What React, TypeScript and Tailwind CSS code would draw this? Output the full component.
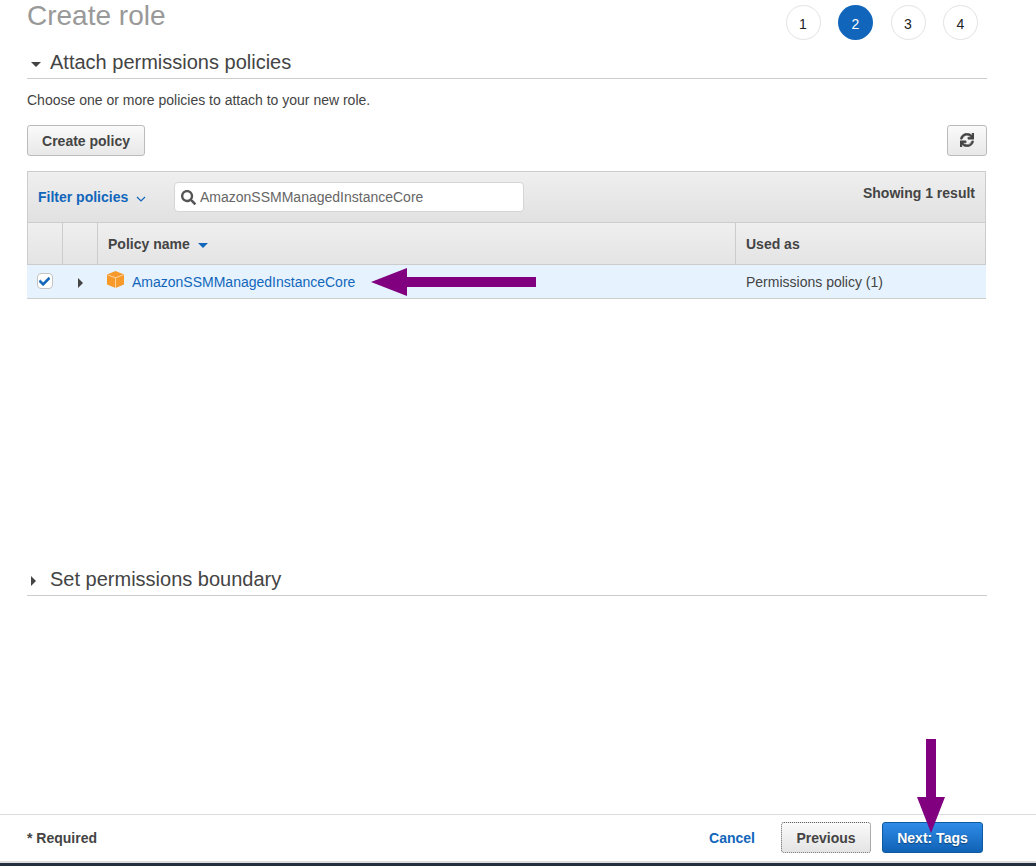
import React from "react";
import { FaSync, FaSearch, FaCheck } from "react-icons/fa";

function Caret({ dir, className }: { dir: "down" | "right"; className: string }) {
  return dir === "down" ? (
    <svg width="10" height="5" viewBox="0 0 10 5" className={className} fill="currentColor"><polygon points="0,0 10,0 5,5" /></svg>
  ) : (
    <svg width="5" height="10" viewBox="0 0 5 10" className={className} fill="currentColor"><polygon points="0,0 5,5 0,10" /></svg>
  );
}

function Step({ n, active }: { n: number; active?: boolean }) {
  return (
    <div className={active
      ? "w-[35px] h-[35px] rounded-full bg-[#1166bb] text-white flex items-center justify-center text-[14px] pt-[4px]"
      : "w-[35px] h-[35px] rounded-full bg-white border border-[#e3e3e3] text-[#222222] flex items-center justify-center text-[14px] pt-[4px]"}>{n}</div>
  );
}

function Heading({ title, open }: { title: string; open: boolean }) {
  return (
    <div className="h-[33px] border-b border-[#cccccc] flex items-center text-[#444444]">
      <span className="w-[23px] flex justify-start pl-[4px] pt-[4px]">
        <Caret dir={open ? "down" : "right"} className="text-[#444444]" />
      </span>
      <h2 className="text-[20px] leading-[24px]">{title}</h2>
    </div>
  );
}

export default function App() {
  return (
    <div className="relative w-[1036px] h-[866px] overflow-hidden bg-white flex flex-col font-['Liberation_Sans',Arial,sans-serif]">
      <main className="flex-1 pl-[27px] pr-[49px]">
        <div className="h-[46px] flex items-start justify-between">
          <h1 className="text-[28px] leading-[32px] text-[#999999]">Create role</h1>
          <div className="flex gap-[17.5px] mt-[5px] mr-[9px]">
            <Step n={1} />
            <Step n={2} active />
            <Step n={3} />
            <Step n={4} />
          </div>
        </div>

        <Heading title="Attach permissions policies" open />

        <p className="mt-[13px] text-[14px] leading-[16px] text-[#444444]">Choose one or more policies to attach to your new role.</p>

        <div className="mt-[17px] flex justify-between">
          <button className="h-[31px] w-[118px] rounded-[3px] border border-[#bbbbbb] bg-linear-to-b from-[#fafafa] to-[#e8e8e8] text-[14px] pt-[2px] font-bold text-[#444444]">Create policy</button>
          <button className="h-[31px] w-[40px] rounded-[3px] border border-[#bbbbbb] bg-linear-to-b from-[#fafafa] to-[#e8e8e8] flex items-center justify-center text-[#444444] pb-[2px]">
            <FaSync size={14} stroke="currentColor" strokeWidth={20} />
          </button>
        </div>

        <div className="mt-[15px] w-[959px] border border-t-[#cccccc] border-x-[#cccccc] border-b-0">
          <div className="h-[51px] flex items-start bg-linear-to-b from-[#efefef] to-[#e1e1e1] border-b border-[#cccccc]">
            <div className="h-[50px] w-[146px] pl-[10px] flex items-center text-[14px] font-bold text-[#1166bb]">
              <span>Filter policies</span>
              <svg width="10" height="6" viewBox="0 0 10 6" className="ml-[8px] mt-[3px]" fill="none" stroke="#1166bb" strokeWidth="1.2"><polyline points="1,1 5,5 9,1" /></svg>
            </div>
            <div className="mt-[10px] w-[350px] h-[30px] bg-white border border-[#d5d5d5] rounded-[4px] flex items-center pl-[6px] text-[14px] text-[#666666]">
              <FaSearch size={15} className="text-[#555555]" />
              <span className="ml-[4px]">AmazonSSMManagedInstanceCore</span>
            </div>
            <div className="flex-1 text-right pr-[10px] pt-[13px] text-[14px] leading-[16px] font-bold text-[#444444]">Showing 1 result</div>
          </div>
          <div className="h-[42px] flex bg-linear-to-b from-[#efefef] to-[#e4e4e4] border-b border-[#cccccc] text-[14px] font-bold text-[#444444]">
            <div className="w-[35px] border-r border-[#cccccc]" />
            <div className="w-[35px] border-r border-[#cccccc]" />
            <div className="w-[638px] border-r border-[#cccccc] pl-[10px] pt-[2px] flex items-center">
              Policy name
              <Caret dir="down" className="ml-[8px] mt-[2px] text-[#1166bb]" />
            </div>
            <div className="flex-1 pl-[10px] pt-[2px] flex items-center">Used as</div>
          </div>
        </div>
        <div className="w-[959px] h-[34px] flex items-center bg-[#e6f3fe] border-b border-[#cccccc] text-[14px]">
          <div className="w-[35px] flex justify-center -mt-[1px]">
            <span className="w-[16px] h-[16px] bg-white border border-[#c4c4c4] rounded-[4px] flex items-center justify-center text-[#1166bb]">
              <FaCheck size={11} stroke="currentColor" strokeWidth={30} />
            </span>
          </div>
          <div className="w-[36px] flex justify-center pt-[3px]">
            <Caret dir="right" className="text-[#444444]" />
          </div>
          <div className="w-[638px] pl-[9px] flex items-center text-[#1166bb]">
            <svg width="17" height="17" viewBox="0 0 17 17" className="-mt-[4px]">
              <polygon points="8.5,0 17,3.5 17,13.5 8.5,17 0,13.5 0,3.5" fill="#f89a2a" />
              <polyline points="0.5,3.8 8.5,6.8 16.5,3.8" fill="none" stroke="#fcd3a0" strokeWidth="1" />
              <line x1="8.5" y1="6.8" x2="8.5" y2="17" stroke="#fcd3a0" strokeWidth="1" />
            </svg>
            <span className="ml-[8px] pt-[2px]">AmazonSSMManagedInstanceCore</span>
          </div>
          <div className="flex-1 pl-[10px] pt-[2px] text-[#444444]">Permissions policy (1)</div>
        </div>

        <div className="mt-[264px]">
          <Heading title="Set permissions boundary" open={false} />
        </div>
      </main>

      <footer className="h-[47px] border-t border-[#dddddd] flex items-center pl-[27px] pr-[53px] text-[14px] font-bold">
        <span className="text-[#444444]">* Required</span>
        <span className="ml-auto text-[#1166bb]">Cancel</span>
        <button className="ml-[26px] -mt-[1px] pt-[1px] w-[90px] h-[31px] rounded-[3px] border border-dotted border-[#666666] bg-linear-to-b from-[#fafafa] to-[#e4e4e4] text-[#444444] font-bold">Previous</button>
        <button className="ml-[11px] -mt-[1px] pt-[1px] w-[101px] h-[31px] rounded-[3px] border border-[#0d5a9f] bg-linear-to-b from-[#2f8ce8] to-[#0f62b5] text-white font-bold [text-shadow:0_1px_1px_rgba(0,0,0,0.4)]">Next: Tags</button>
      </footer>
      <div className="h-[5px] border-t-2 border-[#dddddd] bg-[#232f3e]" />

      <svg className="absolute left-[371px] top-[268px]" width="165" height="28" viewBox="0 0 165 28" fill="#800080">
        <polygon points="0,14 36,0 36,9 165,9 165,19 36,19 36,28" />
      </svg>
      <svg className="absolute left-[917px] top-[739px]" width="28" height="94" viewBox="0 0 28 94" fill="#800080">
        <polygon points="9,0 19,0 19,58 28,58 14,94 0,58 9,58" />
      </svg>
    </div>
  );
}
